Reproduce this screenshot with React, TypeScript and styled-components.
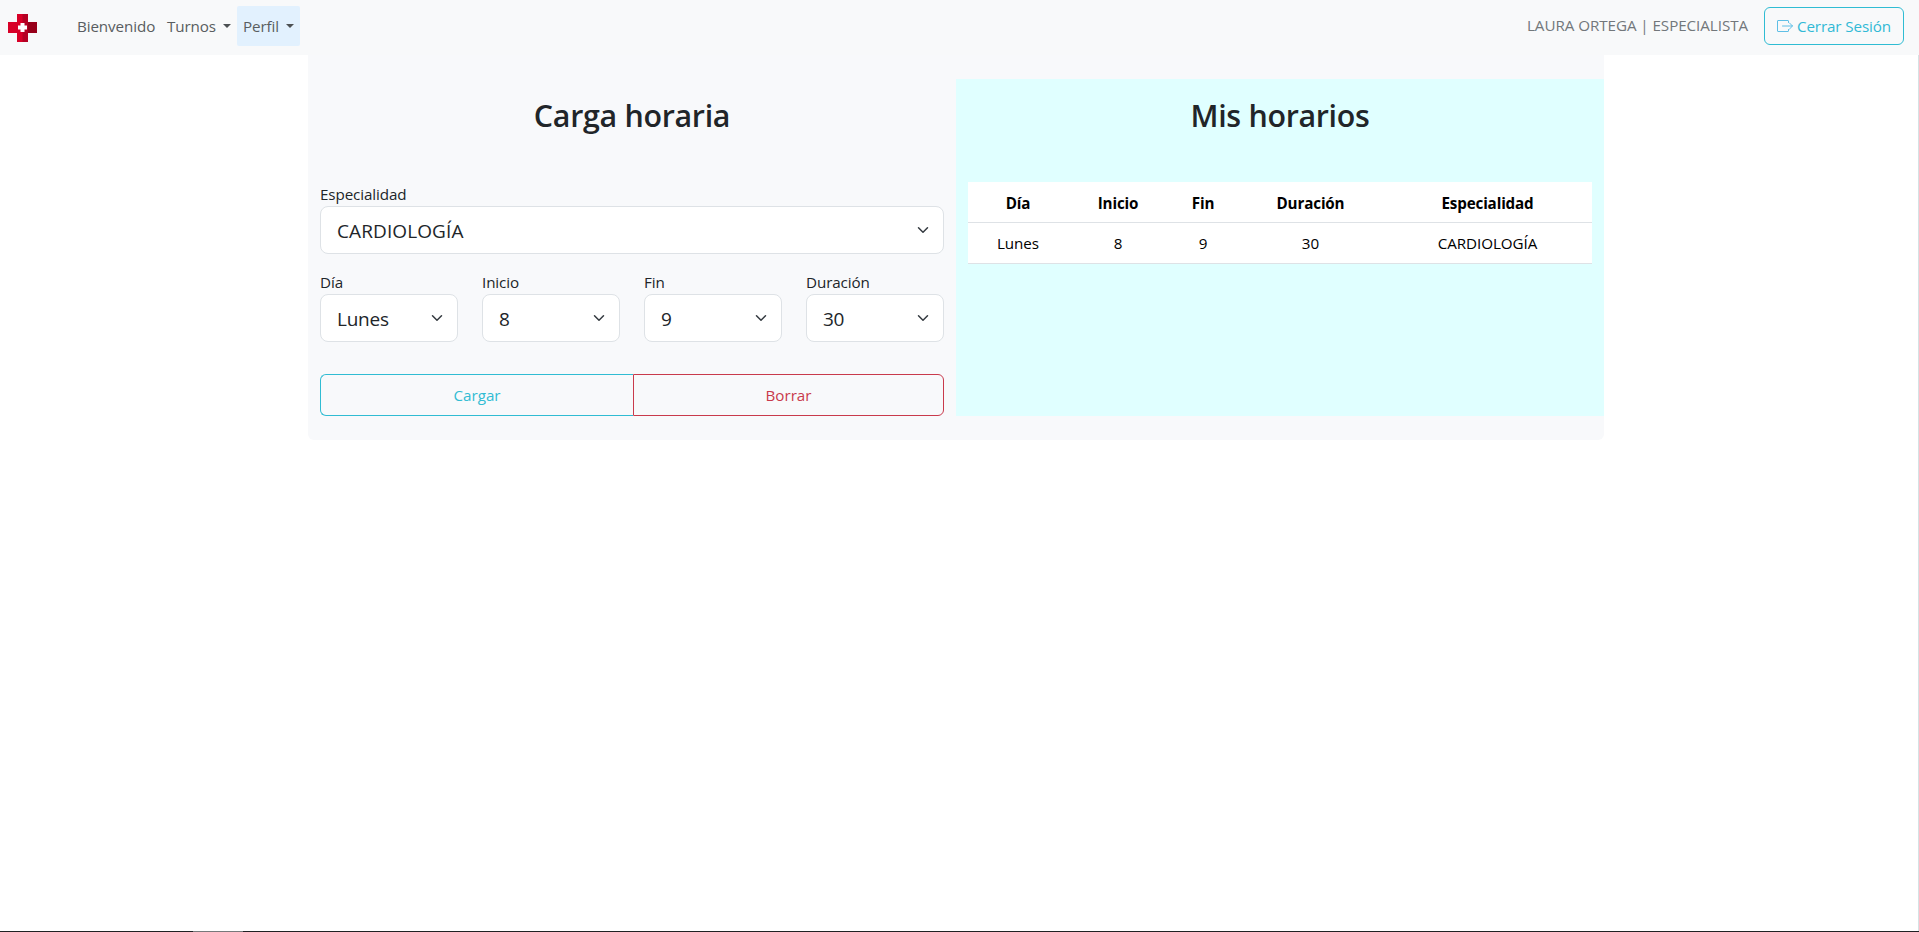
import React from "react";
import styled, { createGlobalStyle, css } from "styled-components";

const GlobalStyle = createGlobalStyle`
  *, *::before, *::after { box-sizing: border-box; }
  html, body { margin: 0; height: 100%; overflow: hidden; }
  #root { height: 100%; }
  body {
    font-family: "Open Sans", "Noto Sans", sans-serif;
    font-size: 15.2px;
    line-height: 24px;
    color: #212529;
    background: #fff;
  }
`;

const Page = styled.div`
  display: flex;
  flex-direction: column;
  height: 100vh;
`;

const Content = styled.div`
  flex: 1;
  border-right: 1px solid #d5e2e4;
`;

const BottomEdge = styled.footer`
  height: 1px;
  flex: none;
  background: linear-gradient(to right, #202124 193px, #77797b 193px 243px, #202124 243px);
`;

const Navbar = styled.nav`
  display: flex;
  align-items: center;
  height: 55px;
  flex: none;
  padding: 0 15px 3px 8px;
  background: #f8f9fa;
`;

const Logo = styled.svg`
  width: 29px;
  height: 28px;
  margin: 4px 34px 0 0;
`;

const NavItem = styled.a<{ $active?: boolean; $width: number }>`
  display: flex;
  align-items: center;
  justify-content: space-between;
  width: ${(p) => p.$width}px;
  height: 40px;
  padding: 0 6px;
  border-radius: 2px;
  color: #595d60;
  letter-spacing: -0.1px;
  white-space: nowrap;
  ${(p) => p.$active && css`background: #e2f1fe;`}
`;

const Caret = styled.span`
  border: 4.5px solid transparent;
  border-top-color: #4c5053;
  border-bottom: 0;
`;

const UserName = styled.span`
  margin: -3px 16px 0 auto;
  color: #72777b;
  letter-spacing: -0.06px;
  white-space: nowrap;
`;

const LogoutButton = styled.button`
  display: flex;
  align-items: center;
  gap: 4px;
  width: 140px;
  height: 38px;
  padding: 0 12px;
  border: 1px solid #2fbcd3;
  border-radius: 6px;
  background: transparent;
  color: #31b9d6;
  font: inherit;
  letter-spacing: -0.12px;
  white-space: nowrap;

  svg {
    flex: none;
    margin-top: -1px;
  }
`;

const Panel = styled.main`
  display: grid;
  grid-template-columns: 648px 648px;
  width: 1296px;
  height: 385px;
  margin-left: 308px;
  padding: 24px 0;
  border-radius: 0 0 6px 6px;
  background: #f8f9fb;
`;

const Column = styled.section<{ $tinted?: boolean }>`
  padding: 0 12px;
  background: ${(p) => (p.$tinted ? "#e0ffff" : "transparent")};
`;

const Title = styled.h2`
  height: 103px;
  margin: 0;
  padding-top: 17px;
  font-size: 30.4px;
  line-height: 40px;
  font-weight: 600;
  letter-spacing: -0.3px;
  text-align: center;
`;

const Field = styled.label`
  display: flex;
  flex-direction: column;
  letter-spacing: -0.1px;
`;

const FieldRow = styled.div`
  display: grid;
  grid-template-columns: repeat(4, 138px);
  gap: 24px;
  margin-top: 16px;
`;

const SelectBox = styled.span`
  display: flex;
  align-items: center;
  justify-content: space-between;
  height: 48px;
  padding: 0 14px 0 16px;
  border: 1px solid #dee2e6;
  border-radius: 8px;
  background: #fff;
`;

const SelectValue = styled.span<{ $upper: boolean }>`
  padding-top: 2px;
  font-size: 19px;
  letter-spacing: ${(p) => (p.$upper ? "0.1px" : "-0.25px")};
`;

const ButtonGroup = styled.div`
  display: flex;
  margin-top: 32px;
`;

const GroupButton = styled.button<{ $color: string; $width: number; $side: "left" | "right" }>`
  width: ${(p) => p.$width}px;
  height: 42px;
  border: 1px solid ${(p) => p.$color};
  border-radius: ${(p) => (p.$side === "left" ? "6px 0 0 6px" : "0 6px 6px 0")};
  ${(p) => p.$side === "left" && css`border-right: 0;`}
  background: transparent;
  color: ${(p) => p.$color};
  font: inherit;
`;

const Table = styled.table`
  width: 624px;
  table-layout: fixed;
  border-collapse: separate;
  border-spacing: 0;
  background: #fff;
  color: #000;
  text-align: center;
`;

const Cell = styled.td`
  height: 41px;
  padding: 0;
  border-bottom: 1px solid #dee2e6;
  letter-spacing: -0.05px;
`;

const HeadCell = styled(Cell).attrs({ as: "th" })`
  padding-top: 1px;
  font-weight: 700;
  letter-spacing: -0.15px;
`;

const Chevron = () => (
  <svg width="12" height="12" viewBox="0 0 16 16" fill="none" stroke="#343a40" strokeWidth="2" strokeLinecap="round" strokeLinejoin="round">
    <path d="m2 5 6 6 6-6" />
  </svg>
);

const Select = ({ label, value }: { label: string; value: string }) => (
  <Field>
    {label}
    <SelectBox>
      <SelectValue $upper={value.length > 5}>{value}</SelectValue>
      <Chevron />
    </SelectBox>
  </Field>
);

const columns: [string, number][] = [
  ["Día", 100],
  ["Inicio", 100],
  ["Fin", 70],
  ["Duración", 145],
  ["Especialidad", 209],
];
const rows = [["Lunes", "8", "9", "30", "CARDIOLOGÍA"]];

export default function App() {
  return (
    <Page>
      <GlobalStyle />
      <Navbar>
        <Logo viewBox="0 0 29 28">
          <path d="M9 0h11v8h9v11h-9v9H9v-9H0V8h9z" fill="#d80027" />
          <path d="M14.500 0H20v8h9v11h-9v9h-5.500z" fill="#b50023" />
          <path d="M20 8h9v11h-9z" fill="#970019" />
          <path d="M12.500 9h4v2.500H19v4h-2.500V18h-4v-2.500H10v-4h2.500z" fill="#fff" />
        </Logo>
        <NavItem $width={90}>Bienvenido</NavItem>
        <NavItem $width={76}>Turnos <Caret /></NavItem>
        <NavItem $width={63} $active>Perfil <Caret /></NavItem>
        <UserName>LAURA ORTEGA | ESPECIALISTA</UserName>
        <LogoutButton>
          <svg width="16" height="16" viewBox="0 0 16 16" fill="none" stroke="#5fbfe6" strokeLinecap="round" strokeLinejoin="round">
            <path d="M11.500 4.500V3a.5.5 0 0 0-.5-.500H1a.5.5 0 0 0-.5.500v10a.5.5 0 0 0 .5.500h10a.5.5 0 0 0 .5-.500v-1.500M5.500 8h10M12.500 5l3 3-3 3" />
          </svg>
          Cerrar Sesión
        </LogoutButton>
      </Navbar>
      <Content>
        <Panel>
          <Column>
            <Title>Carga horaria</Title>
            <Select label="Especialidad" value="CARDIOLOGÍA" />
            <FieldRow>
              <Select label="Día" value="Lunes" />
              <Select label="Inicio" value="8" />
              <Select label="Fin" value="9" />
              <Select label="Duración" value="30" />
            </FieldRow>
            <ButtonGroup>
              <GroupButton $color="#31bcd3" $width={313} $side="left">Cargar</GroupButton>
              <GroupButton $color="#c93a4c" $width={311} $side="right">Borrar</GroupButton>
            </ButtonGroup>
          </Column>
          <Column $tinted>
            <Title>Mis horarios</Title>
            <Table>
              <colgroup>
                {columns.map(([name, width]) => <col key={name} width={width} />)}
              </colgroup>
              <thead>
                <tr>{columns.map(([name]) => <HeadCell key={name}>{name}</HeadCell>)}</tr>
              </thead>
              <tbody>
                {rows.map((row) => (
                  <tr key={row[0]}>{row.map((value, i) => <Cell key={i}>{value}</Cell>)}</tr>
                ))}
              </tbody>
            </Table>
          </Column>
        </Panel>
      </Content>
      <BottomEdge />
    </Page>
  );
}
